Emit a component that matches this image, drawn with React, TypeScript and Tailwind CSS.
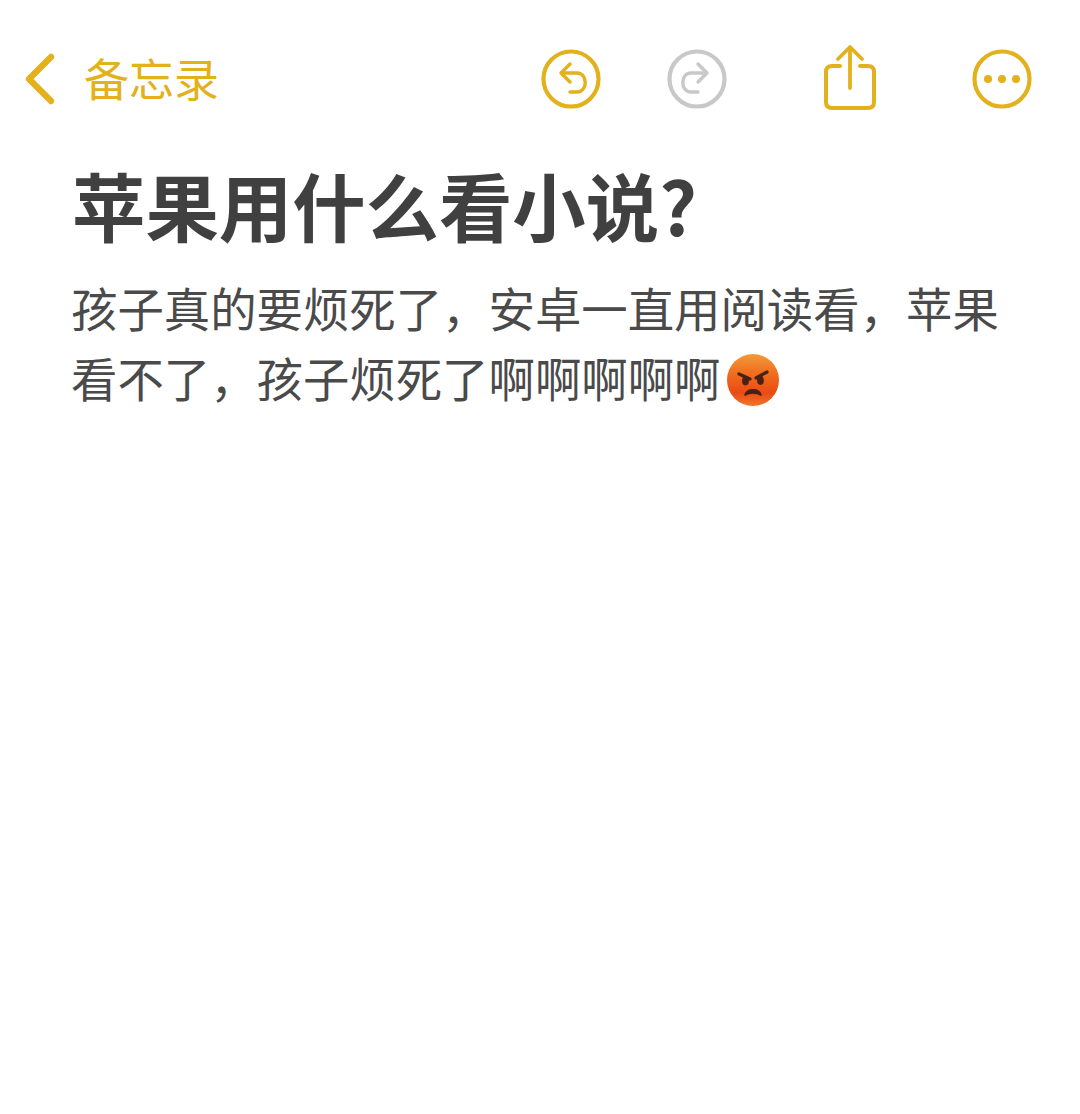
import React from 'react';

const gold = '#e2b11c';

const AngryEmoji = () => (
  <svg viewBox="0 0 54 54" className="ml-[6px] mt-[6px] w-[54px] h-[54px]">
    <defs>
      <linearGradient id="face" x1="0" y1="0" x2="0" y2="1">
        <stop offset="0%" stopColor="#f39a3a" />
        <stop offset="35%" stopColor="#f0701f" />
        <stop offset="75%" stopColor="#ea4a14" />
        <stop offset="100%" stopColor="#f0782a" />
      </linearGradient>
    </defs>
    <circle cx="27" cy="27" r="26" fill="url(#face)" />
    <path d="M13 21 L24 26" stroke="#4a2212" strokeWidth="3.2" strokeLinecap="round" fill="none" />
    <path d="M41 19 L30 25" stroke="#4a2212" strokeWidth="3.2" strokeLinecap="round" fill="none" />
    <ellipse cx="19.5" cy="28" rx="3.4" ry="4.4" fill="#4a2012" />
    <ellipse cx="34.5" cy="27.5" rx="3.4" ry="4.4" fill="#4a2012" />
    <path d="M19 42 C21 35 33 35 35 42 C31 39.4 23 39.4 19 42 Z" fill="#4a2012" stroke="#4a2012" strokeWidth="1.6" strokeLinejoin="round" />
  </svg>
);

const UndoIcon = ({ color, flip }: { color: string; flip?: boolean }) => (
  <svg viewBox="0 0 60 60" className="w-[60px] h-[60px]" fill="none" stroke={color} strokeLinecap="round" strokeLinejoin="round">
    <circle cx="30" cy="30" r="27.5" strokeWidth="4.2" />
    <g strokeWidth="3.4" transform={flip ? 'matrix(-1 0 0 1 60 0)' : undefined}>
      <path d="M29 15 L20 24 L29 33" />
      <path d="M21 24 H36 C47 24 47 43 36 43 H29" />
    </g>
  </svg>
);

const ShareIcon = () => (
  <svg viewBox="0 0 54 68" className="w-[54px] h-[68px]" fill="none" stroke={gold} strokeLinecap="round" strokeLinejoin="round">
    <path d="M17 22 H9 Q3 22 3 28 V58 Q3 64 9 64 H45 Q51 64 51 58 V28 Q51 22 45 22 H37" strokeWidth="4" />
    <path d="M27 44 V4" strokeWidth="3.8" />
    <path d="M15 15 L27 3 L39 15" strokeWidth="3.8" />
  </svg>
);

const MoreIcon = () => (
  <svg viewBox="0 0 60 60" className="w-[60px] h-[60px]" fill="none">
    <circle cx="30" cy="30" r="27.5" stroke={gold} strokeWidth="4.2" />
    <circle cx="16" cy="30" r="4" fill={gold} />
    <circle cx="30" cy="30" r="4" fill={gold} />
    <circle cx="44" cy="30" r="4" fill={gold} />
  </svg>
);

export default function App() {
  return (
    <div className="w-[1080px] h-[1114px] bg-white overflow-hidden font-['Noto_Sans_CJK_SC','Noto_Sans',sans-serif]">
      {/* Top bar */}
      <div className="flex items-center h-[60px] mt-[49px] pl-[24px]">
        <svg viewBox="0 0 32 52" className="w-[32px] h-[52px]" fill="none" stroke={gold} strokeWidth="6.4" strokeLinecap="round" strokeLinejoin="round">
          <path d="M27 4 L5 26 L27 48" />
        </svg>
        <span className="ml-[28px] -mt-[3px] text-[45px] leading-none text-[#e2b11c]">备忘录</span>
        <div className="ml-[322px] flex items-center">
          <UndoIcon color={gold} />
          <div className="ml-[66px]">
            <UndoIcon color="#c8c8c8" flip />
          </div>
          <div className="ml-[96px] -mt-[3px]">
            <ShareIcon />
          </div>
          <div className="ml-[95px]">
            <MoreIcon />
          </div>
        </div>
      </div>

      {/* Note */}
      <div className="pl-[72px] pr-[70px] pt-[45px]">
        <h1 className="text-[73.4px] leading-[100px] font-bold text-[#404040] whitespace-nowrap">苹果用什么看小说?</h1>
        <p className="-ml-px mt-[18px] text-[46.4px] leading-[70px] text-[#4a4a4a] whitespace-nowrap">孩子真的要烦死了，安卓一直用阅读看，苹果</p>
        <p className="-ml-px flex items-center text-[46.4px] leading-[70px] text-[#4a4a4a] whitespace-nowrap">
          看不了，孩子烦死了啊啊啊啊啊
          <AngryEmoji />
        </p>
      </div>
    </div>
  );
}
